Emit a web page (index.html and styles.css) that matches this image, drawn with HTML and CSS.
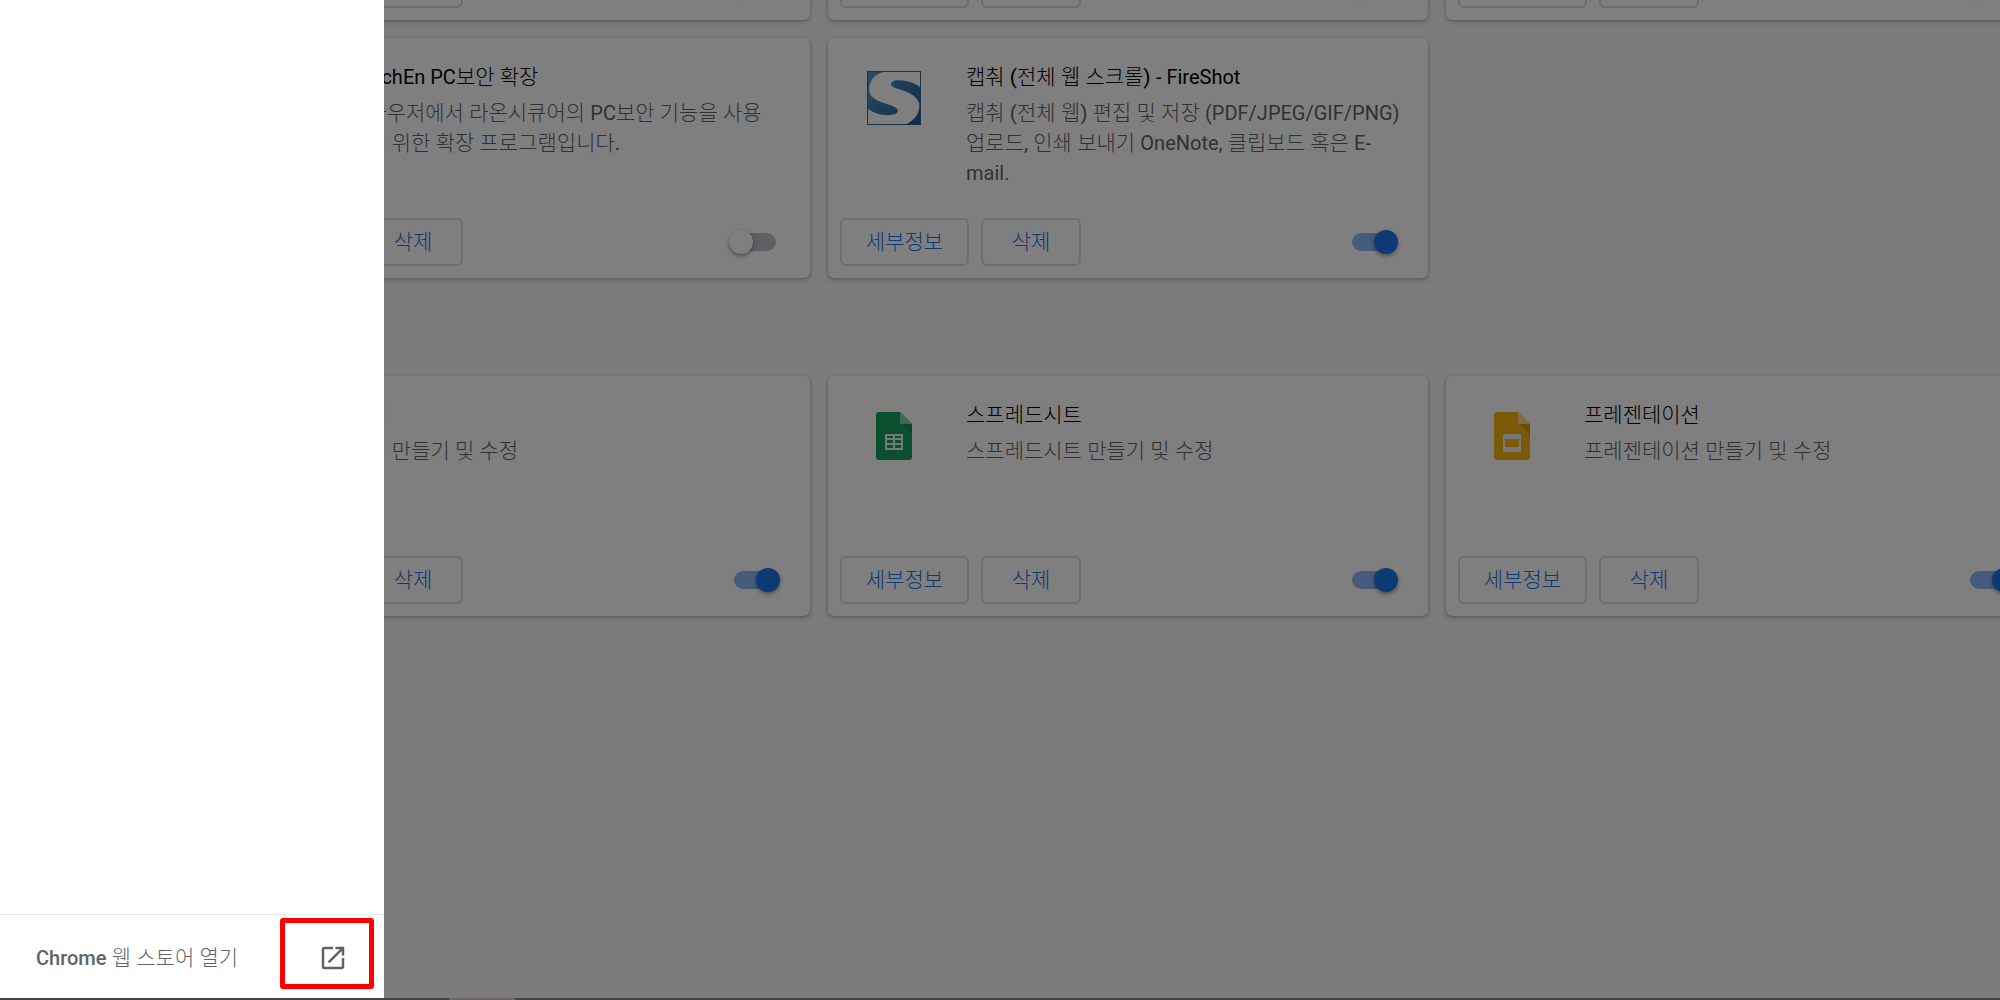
FILE: index.html
```html
<!DOCTYPE html>
<html lang="ko">
<head>
<meta charset="utf-8">
<title>확장 프로그램</title>
<link rel="stylesheet" href="styles.css">
</head>
<body>
<div class="window">
  <main class="extensions">
    <section class="cards cards-scrolled">
      <article class="card">
        <div class="actions"><button class="btn btn-details" type="button" aria-label="세부정보"></button><button class="btn btn-remove" type="button" aria-label="삭제"></button><input class="toggle" type="checkbox" aria-label="사용"></div>
      </article>
      <article class="card">
        <div class="actions"><button class="btn btn-details" type="button" aria-label="세부정보"></button><button class="btn btn-remove" type="button" aria-label="삭제"></button><input class="toggle" type="checkbox" aria-label="사용"></div>
      </article>
      <article class="card">
        <div class="actions"><button class="btn btn-details" type="button" aria-label="세부정보"></button><button class="btn btn-remove" type="button" aria-label="삭제"></button><input class="toggle" type="checkbox" aria-label="사용"></div>
      </article>
      <article class="card">
        <div class="info">
          <div class="icon"></div>
          <div class="text">
            <h3><span class="latin">TouchEn PC</span>보안 확장</h3>
            <p>브라우저에서 라온시큐어의 <span class="latin">PC</span>보안 기능을 사용<br>하기 위한 확장 프로그램입니다.</p>
          </div>
        </div>
        <div class="actions"><button class="btn btn-details" type="button">세부정보</button><button class="btn btn-remove" type="button">삭제</button><input class="toggle" type="checkbox" aria-label="TouchEn PC보안 확장"></div>
      </article>
      <article class="card">
        <div class="info">
          <svg class="icon" viewBox="0 0 162 162" aria-hidden="true">
            <defs><linearGradient id="fs" x1="0" y1="0" x2="1" y2="1"><stop offset="0" stop-color="#4f9bd2"/><stop offset="1" stop-color="#20598c"/></linearGradient></defs>
            <rect x="1" y="1" width="160" height="160" fill="url(#fs)"/>
            <path d="M50 3C20 10 6 32 6 58C9 88 46 94 74 104C96 112 96 122 86 128C60 138 24 130 3 114V159H119C148 145 158 124 157 100C153 72 112 60 88 52C68 46 68 34 82 29C112 24 142 35 159 48V3Z" fill="#fff"/>
            <rect x="1" y="1" width="160" height="160" fill="none" stroke="#28618f" stroke-width="3"/>
          </svg>
          <div class="text">
            <h3>캡춰 (전체 웹 스크롤) <span class="latin">- FireShot</span></h3>
            <p>캡춰 (전체 웹) 편집 및 저장 <span class="latin">(PDF/JPEG/GIF/PNG)</span> 업로드, 인쇄 보내기 <span class="latin">OneNote,</span> 클립보드 혹은 <span class="latin">E-mail.</span></p>
          </div>
        </div>
        <div class="actions"><button class="btn btn-details" type="button">세부정보</button><button class="btn btn-remove" type="button">삭제</button><input class="toggle" type="checkbox" checked aria-label="FireShot"></div>
      </article>
    </section>

    <section class="cards">
      <article class="card">
        <div class="info">
          <div class="icon"></div>
          <div class="text">
            <h3>문서</h3>
            <p>문서 만들기 및 수정</p>
          </div>
        </div>
        <div class="actions"><button class="btn btn-details" type="button">세부정보</button><button class="btn btn-remove" type="button">삭제</button><input class="toggle" type="checkbox" checked aria-label="문서"></div>
      </article>
      <article class="card">
        <div class="info">
          <svg class="icon" viewBox="0 0 54 54" aria-hidden="true">
            <path d="M12 3H33L45 15V48a3 3 0 0 1-3 3H12a3 3 0 0 1-3-3V6a3 3 0 0 1 3-3z" fill="#159f5c"/>
            <path d="M34 15H45V26z" fill="#0b7d45" opacity=".5"/>
            <path d="M33 3L45 15H33z" fill="#87ceac"/>
            <path d="M18 25H36V41H18zM20 27v2h6v-2zM28 27v2h6v-2zM20 31v3h6v-3zM28 31v3h6v-3zM20 36v3h6v-3zM28 36v3h6v-3z" fill="#f1f1f1" fill-rule="evenodd"/>
          </svg>
          <div class="text">
            <h3>스프레드시트</h3>
            <p>스프레드시트 만들기 및 수정</p>
          </div>
        </div>
        <div class="actions"><button class="btn btn-details" type="button">세부정보</button><button class="btn btn-remove" type="button">삭제</button><input class="toggle" type="checkbox" checked aria-label="스프레드시트"></div>
      </article>
      <article class="card">
        <div class="info">
          <svg class="icon" viewBox="0 0 54 54" aria-hidden="true">
            <path d="M12 3H33L45 15V48a3 3 0 0 1-3 3H12a3 3 0 0 1-3-3V6a3 3 0 0 1 3-3z" fill="#f4b411"/>
            <path d="M34 15H45V26z" fill="#b9830c" opacity=".5"/>
            <path d="M33 3L45 15H33z" fill="#fadb88"/>
            <path d="M19 25H35a1 1 0 0 1 1 1V42a1 1 0 0 1-1 1H19a1 1 0 0 1-1-1V26a1 1 0 0 1 1-1zM20 30v8h14v-8z" fill="#f1f1f1" fill-rule="evenodd"/>
          </svg>
          <div class="text">
            <h3>프레젠테이션</h3>
            <p>프레젠테이션 만들기 및 수정</p>
          </div>
        </div>
        <div class="actions"><button class="btn btn-details" type="button">세부정보</button><button class="btn btn-remove" type="button">삭제</button><input class="toggle" type="checkbox" checked aria-label="프레젠테이션"></div>
      </article>
    </section>
  </main>

  <div class="scrim"></div>

  <aside class="drawer">
    <a class="store-link" href="#">
      <span><span class="latin">Chrome</span> 웹 스토어 열기</span>
      <svg class="launch" viewBox="0 0 24 24" aria-hidden="true"><path d="M19 19H5V5h7V3H5a2 2 0 0 0-2 2v14a2 2 0 0 0 2 2h14c1.1 0 2-.9 2-2v-7h-2v7zM14 3v2h3.59l-9.83 9.83 1.41 1.41L19 6.41V10h2V3h-7z"/></svg>
      <span class="marker"></span>
    </a>
  </aside>
</div>
<footer class="taskbar"><span class="task"></span></footer>
</body>
</html>
```

FILE: styles.css
```css
* {
  box-sizing: border-box;
}

body {
  margin: 0;
  height: 100vh;
  display: flex;
  flex-direction: column;
  overflow: hidden;
  font-family: Roboto, "Noto Sans CJK KR Light", "Noto Sans CJK KR", sans-serif;
  font-size: 21px;
  line-height: 30px;
  color: #5f6368;
}

/* Latin runs sit slightly smaller beside Hangul */
.latin {
  font-size: 20px;
}

.window {
  position: relative;
  flex: 1;
  min-height: 0;
  overflow: hidden;
  background: #f8f9fa;
}

.extensions {
  display: flex;
  flex-direction: column;
  gap: 98px;
  padding-left: 210px;
}

.cards {
  display: grid;
  grid-template-columns: repeat(3, 600px);
  gap: 18px;
}

/* the list is scrolled so that only the foot of its first row shows */
.cards-scrolled {
  margin-top: -220px;
}

.card {
  display: flex;
  flex-direction: column;
  min-height: 240px;
  padding: 24px 12px 12px;
  border-radius: 6px;
  background: #fff;
  box-shadow: 0 1px 3px rgba(60, 64, 67, .3), 0 2px 5px 1px rgba(60, 64, 67, .15);
}

.info {
  display: flex;
  gap: 45px;
  padding: 0 12px 0 27px;
}

.icon {
  flex: none;
  width: 54px;
  height: 54px;
  margin-top: 9px;
}

.text h3 {
  margin: 0 0 6px;
  font-size: 21px;
  font-weight: 400;
  color: #000;
}

.text p {
  margin: 0;
}

.actions {
  display: flex;
  align-items: center;
  gap: 12px;
  margin-top: auto;
}

.btn {
  height: 48px;
  padding: 0;
  border: 2px solid #dadce0;
  border-radius: 6px;
  background: #fff;
  font: inherit;
  color: #1a73e8;
}

.btn-details {
  width: 129px;
}

.btn-remove {
  width: 100px;
}

.toggle {
  appearance: none;
  width: 42px;
  height: 18px;
  margin: 0 22px 0 auto;
  border-radius: 9px;
  background: #bdc1c6;
}

.toggle::before {
  content: "";
  display: block;
  width: 24px;
  height: 24px;
  margin: -3px 0 0 -5px;
  border-radius: 50%;
  background: #fff;
  box-shadow: 0 2px 4px rgba(0, 0, 0, .4);
}

.toggle:checked {
  background: #8cb9f4;
}

.toggle:checked::before {
  margin-left: 22px;
  background: #1a73e8;
}

.scrim {
  position: absolute;
  inset: 0;
  background: rgba(0, 0, 0, .5);
}

.drawer {
  position: absolute;
  inset: 0 auto 0 0;
  width: 384px;
  display: flex;
  flex-direction: column;
  justify-content: flex-end;
  background: #fff;
}

.store-link {
  position: relative;
  display: flex;
  align-items: center;
  justify-content: space-between;
  height: 84px;
  padding: 2px 36px 0;
  border-top: 1px solid #e8e8e8;
  font-weight: 500;
  color: #5f6368;
  text-decoration: none;
}

.launch {
  width: 30px;
  height: 30px;
  fill: #5f6368;
}

.marker {
  position: absolute;
  top: 3px;
  right: 10px;
  bottom: 9px;
  width: 94px;
  border: 5px solid #f00;
  border-radius: 3px;
}

.taskbar {
  height: 2px;
  padding-left: 449px;
  background: #454347;
}

.task {
  display: block;
  width: 66px;
  height: 2px;
  background: #6b656b;
}
```
